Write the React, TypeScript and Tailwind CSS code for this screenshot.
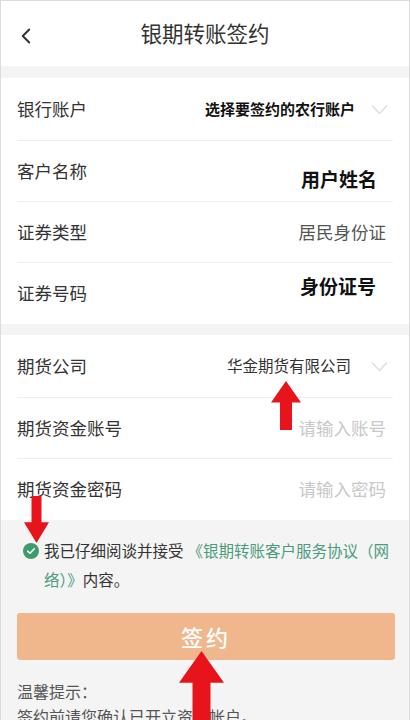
import { ChevronLeft } from "lucide-react";

const font = { fontFamily: '"Noto Sans CJK SC", "Noto Sans", sans-serif' };

function Row({ label, children, last, tall }: { label: string; children?: React.ReactNode; last?: boolean; tall?: boolean }) {
  return (
    <div className={`${tall ? "h-[63px]" : "h-[61px]"} mx-4 flex items-center justify-between ${last ? "" : "border-b border-[#eeeeee]"}`}>
      <span className="text-[17.5px] text-[#333333]">{label}</span>
      {children}
    </div>
  );
}

function Chevron() {
  return (
    <svg viewBox="0 0 17 11" className="h-[11px] w-[17px]">
      <polyline points="1,1.5 8.5,9.5 16,1.5" fill="none" stroke="#dddddd" strokeWidth="1.4" />
    </svg>
  );
}

function Arrow({ className, down }: { className: string; down?: boolean }) {
  return (
    <svg className={`absolute ${className}`} viewBox="0 0 30 50" preserveAspectRatio="none">
      <polygon
        points={down ? "9,0 21,0 21,28 30,28 15,50 0,28 9,28" : "15,0 30,22 21,22 21,50 9,50 9,22 0,22"}
        fill="#e8141c"
      />
    </svg>
  );
}

export default function App() {
  return (
    <div style={font} className="relative h-[720px] w-[410px] overflow-hidden border-x border-t border-[#dcdcdc] bg-[#f4f4f4]">
      <header className="relative flex h-[65px] items-center justify-center bg-white">
        <ChevronLeft className="absolute left-[12px] top-[22px] h-[26px] w-[26px] text-[#333333]" strokeWidth={1.8} />
        <h1 className="text-[21.5px] text-[#333333]">银期转账签约</h1>
      </header>

      <section className="mt-[12px] bg-white">
        <Row label="银行账户" tall>
          <div className="flex items-center gap-[16px] pr-[5px]">
            <span className="text-[15px] font-bold text-[#111111]">选择要签约的农行账户</span>
            <Chevron />
          </div>
        </Row>
        <Row label="客户名称">
          <span className="mr-[16px] mt-[16px] text-[19px] font-bold text-[#111111]">用户姓名</span>
        </Row>
        <Row label="证券类型">
          <span className="pr-[7px] text-[17.5px] text-[#555555]">居民身份证</span>
        </Row>
        <Row label="证券号码" last>
          <span className="mb-[14px] mr-[17px] text-[19px] font-bold text-[#111111]">身份证号</span>
        </Row>
      </section>

      <section className="mt-[11px] bg-white">
        <Row label="期货公司" tall>
          <div className="flex items-center gap-[20px] pr-[5px]">
            <span className="text-[15.5px] text-[#333333]">华金期货有限公司</span>
            <Chevron />
          </div>
        </Row>
        <Row label="期货资金账号">
          <span className="pr-[7px] text-[17.5px] text-[#c8c8c8]">请输入账号</span>
        </Row>
        <Row label="期货资金密码" last>
          <span className="pr-[7px] text-[17.5px] text-[#c8c8c8]">请输入密码</span>
        </Row>
      </section>

      <div className="relative mt-[16px] pl-[43px] pr-[18px] text-[15.5px] leading-[29px] text-[#333333]">
        <span className="absolute left-[22px] top-[7px] flex h-[16px] w-[16px] items-center justify-center rounded-full bg-[#3f9a72]">
          <svg viewBox="0 0 16 16" className="h-[12px] w-[12px]">
            <path d="M3.5 8.2 L6.6 11 L12.4 5" fill="none" stroke="#ffffff" strokeWidth="2" strokeLinecap="round" strokeLinejoin="round" />
          </svg>
        </span>
        我已仔细阅谈并接受<span className="ml-[4px] text-[#4a9b7c]">《银期转账客户服务协议（网络）》</span>内容。
      </div>

      <button className="mx-4 mt-[19px] flex h-[47px] w-[378px] items-center justify-center rounded-[3px] bg-[#f0b78d] text-[22px] font-medium tracking-[3px] text-white">
        签约
      </button>

      <div className="mt-[19px] px-4 text-[16px] leading-[25px] text-[#555555]">
        <p>温馨提示：</p>
        <p>签约前请您确认已开立资金帐户。</p>
      </div>

      <Arrow className="left-[270px] top-[380px] h-[49px] w-[30px]" />
      <Arrow className="left-[23px] top-[495px] h-[47px] w-[25px]" down />
      <Arrow className="left-[178px] top-[650px] h-[72px] w-[45px]" />
    </div>
  );
}
